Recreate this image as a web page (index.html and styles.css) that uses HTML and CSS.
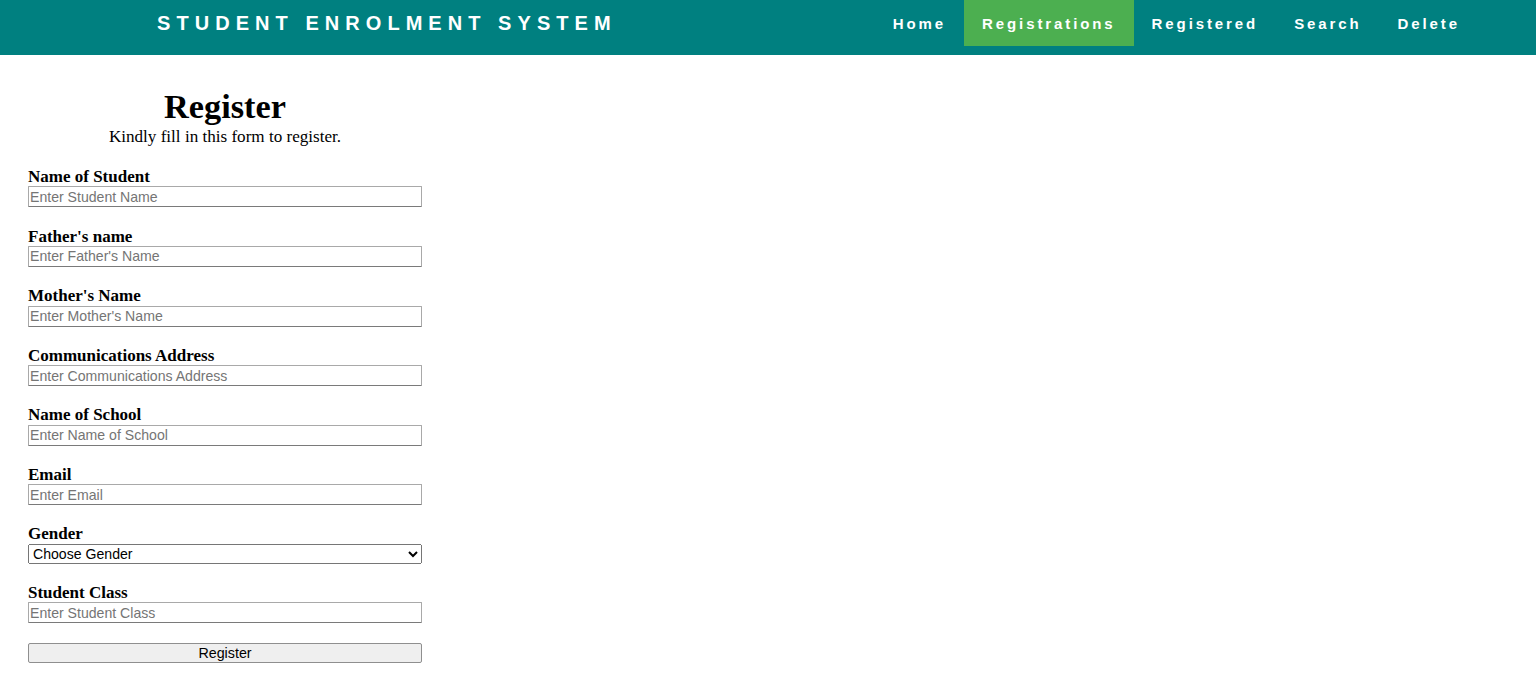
FILE: index.html
```html
<!DOCTYPE html>
<html lang="en">
<head>
<meta charset="utf-8">
<title>Student Enrolment System</title>
<link rel="stylesheet" href="styles.css">
</head>
<body>
<header class="topbar">
  <div class="brand">STUDENT ENROLMENT SYSTEM</div>
  <nav class="nav">
    <a class="nav-item" href="#">Home</a>
    <a class="nav-item active" href="#">Registrations</a>
    <a class="nav-item" href="#">Registered</a>
    <a class="nav-item" href="#">Search</a>
    <a class="nav-item" href="#">Delete</a>
  </nav>
</header>
<main class="container">
  <h1 class="title">Register</h1>
  <p class="subtitle">Kindly fill in this form to register.</p>
  <form class="form">
    <div class="field">
      <label class="label" for="sname">Name of Student</label>
      <input class="control" id="sname" type="text" placeholder="Enter Student Name">
    </div>
    <div class="field">
      <label class="label" for="fname">Father's name</label>
      <input class="control" id="fname" type="text" placeholder="Enter Father's Name">
    </div>
    <div class="field">
      <label class="label" for="mname">Mother's Name</label>
      <input class="control" id="mname" type="text" placeholder="Enter Mother's Name">
    </div>
    <div class="field">
      <label class="label" for="addr">Communications Address</label>
      <input class="control" id="addr" type="text" placeholder="Enter Communications Address">
    </div>
    <div class="field">
      <label class="label" for="school">Name of School</label>
      <input class="control" id="school" type="text" placeholder="Enter Name of School">
    </div>
    <div class="field">
      <label class="label" for="email">Email</label>
      <input class="control" id="email" type="text" placeholder="Enter Email">
    </div>
    <div class="field">
      <label class="label" for="gender">Gender</label>
      <select class="control select" id="gender">
        <option>Choose Gender</option>
        <option>Male</option>
        <option>Female</option>
      </select>
    </div>
    <div class="field">
      <label class="label" for="sclass">Student Class</label>
      <input class="control" id="sclass" type="text" placeholder="Enter Student Class">
    </div>
    <button class="submit" type="button">Register</button>
  </form>
</main>
</body>
</html>
```

FILE: styles.css
```css
html, body {
  margin: 0;
  padding: 0;
  background: #ffffff;
}

body {
  font-family: "Liberation Serif", "Times New Roman", serif;
  color: #000000;
}

.topbar {
  display: flex;
  justify-content: space-between;
  align-items: flex-start;
  height: 55px;
  background: #008080;
  padding: 0 58px 0 157px;
  box-sizing: border-box;
}

.brand {
  font-family: "Liberation Sans", Arial, sans-serif;
  font-weight: bold;
  font-size: 20px;
  letter-spacing: 6.05px;
  color: #ffffff;
  line-height: 46px;
}

.nav {
  display: flex;
}

.nav-item {
  display: block;
  height: 46px;
  line-height: 47px;
  padding: 0 18px;
  font-family: "Liberation Sans", Arial, sans-serif;
  font-weight: bold;
  font-size: 15px;
  letter-spacing: 2.9px;
  color: #ffffff;
  text-decoration: none;
}

.nav-item.active {
  background: #4caf50;
}

.container {
  width: 394px;
  margin: 0 0 0 28px;
  padding-top: 33px;
}

.title {
  margin: 0;
  text-align: center;
  font-size: 34.3px;
  font-weight: bold;
  line-height: 37px;
}

.subtitle {
  margin: 3px 0 0;
  text-align: center;
  font-size: 17.1px;
  line-height: 18px;
}

.form {
  display: flex;
  flex-direction: column;
  margin-top: 22px;
}

.field {
  display: flex;
  flex-direction: column;
  margin-bottom: 20.15px;
}

.label {
  font-size: 17px;
  font-weight: bold;
  line-height: 18.4px;
}

.control {
  width: 394px;
  box-sizing: border-box;
  margin: 0;
  font-family: "Liberation Sans", Arial, sans-serif;
  font-size: 14.1px;
  color: #000000;
}

input.control {
  height: 21px;
  padding: 0 1px;
  border: 1px solid #a9a9a9;
  border-bottom-color: #7a7a7a;
  border-radius: 1px;
  background: #ffffff;
  outline: none;
}

input.control::placeholder {
  color: #757575;
}

.select {
  height: 20px;
  padding: 0;
}

.submit {
  width: 394px;
  height: 20px;
  margin: 0;
  padding: 0;
  font-family: "Liberation Sans", Arial, sans-serif;
  font-size: 14.3px;
  line-height: 18px;
  color: #000000;
  background: #efefef;
  border: 1px solid #8f8f8f;
  border-radius: 2px;
}
```
